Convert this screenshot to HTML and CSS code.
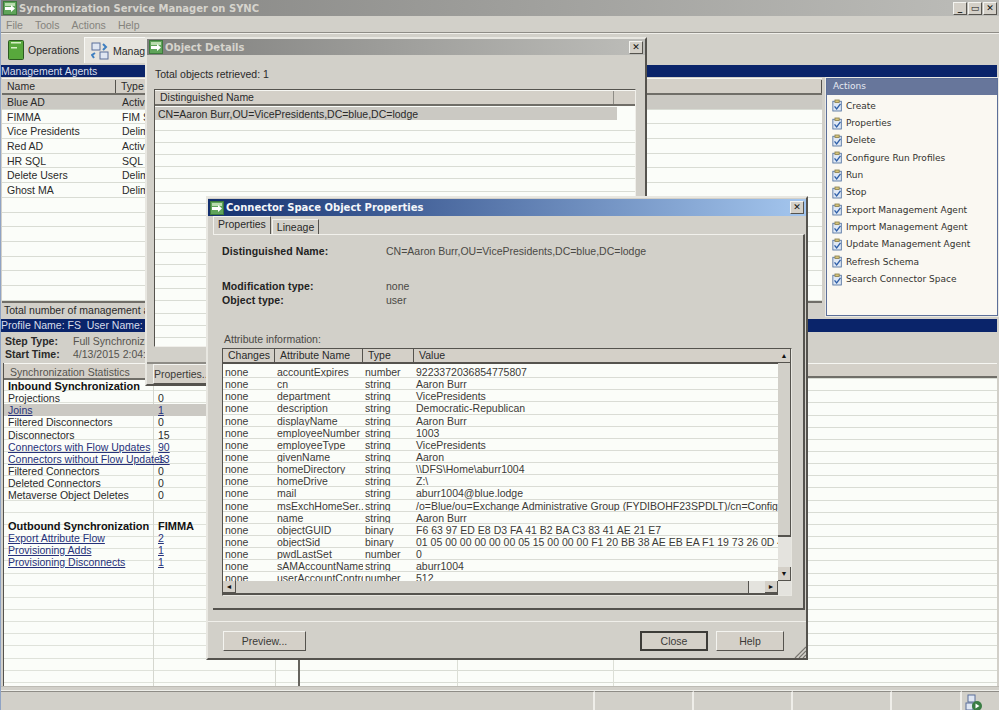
FILE: index.html
```html
<!DOCTYPE html>
<html lang="en">

<head>
    <meta charset="UTF-8">
    <title>Synchronization Service Manager on SYNC</title>
    <link rel="stylesheet" href="styles.css">
</head>

<body>
    <svg class="defs" width="0" height="0">
        <symbol id="app-icon" viewBox="0 0 14 14">
            <rect x="0.5" y="0.5" width="13" height="13" fill="#5fa45a" stroke="#3c7a3c" />
            <rect x="2" y="2" width="10" height="3" fill="#b9dcae" />
            <path d="M2 6h6V4l4 3.5-4 3.5V9H2z" fill="#fff" />
        </symbol>
        <symbol id="task-icon" viewBox="0 0 13 14">
            <rect x="1" y="2" width="10" height="11.5" fill="#dfe8f4" stroke="#4f6f9f" />
            <rect x="3.5" y="0.5" width="5" height="3" fill="#d8c67c" stroke="#8b8050" />
            <path d="M3 8l2.5 3L10 5" fill="none" stroke="#2f5fa8" stroke-width="1.6" />
        </symbol>
    </svg>

    <div class="window">
        <div class="titlebar inactive">
            <svg class="title-icon"><use href="#app-icon" /></svg>
            <span class="title-text">Synchronization Service Manager on SYNC</span>
            <div class="caption-buttons">
                <span class="caption-btn">_</span>
                <span class="caption-btn">&#9645;</span>
                <span class="caption-btn">&#10005;</span>
            </div>
        </div>

        <div class="menubar">
            <span>File</span>
            <span>Tools</span>
            <span>Actions</span>
            <span>Help</span>
        </div>

        <div class="toolbar">
            <div class="tool">
                <svg width="16" height="20" viewBox="0 0 16 20">
                    <rect x="0.5" y="0.5" width="15" height="19" rx="1" fill="#58a83c" stroke="#2c5a20" />
                    <rect x="3" y="2" width="10" height="1.5" fill="#d6efc4" />
                    <rect x="3" y="7" width="6" height="1.5" fill="#d6efc4" />
                </svg>
                <span>Operations</span>
            </div>
            <div class="tool tool-active">
                <svg width="18" height="18" viewBox="0 0 18 18">
                    <rect x="1" y="1" width="8" height="7" fill="#dfe6f2" stroke="#5b6f9a" />
                    <rect x="9" y="10" width="8" height="7" fill="#dfe6f2" stroke="#5b6f9a" />
                    <path d="M12 2l3 3-3 3M3 16l-2-3 3-2" fill="none" stroke="#3f7fc0" stroke-width="2" />
                </svg>
                <span>Management Agents</span>
            </div>
        </div>

        <div class="bluebar">Management Agents</div>

        <section class="upper">
            <div class="agents">
                <div class="list-head agents-head">
                    <span>Name</span>
                    <span>Type</span>
                    <span></span>
                </div>
                <div class="agents-body">
                    <div class="agent selected"><span>Blue AD</span><span>Active Directory</span></div>
                    <div class="agent"><span>FIMMA</span><span>FIM Service</span></div>
                    <div class="agent"><span>Vice Presidents</span><span>Delimited</span></div>
                    <div class="agent"><span>Red AD</span><span>Active Directory</span></div>
                    <div class="agent"><span>HR SQL</span><span>SQL Server</span></div>
                    <div class="agent"><span>Delete Users</span><span>Delimited</span></div>
                    <div class="agent"><span>Ghost MA</span><span>Delimited</span></div>
                </div>
                <div class="agents-total">Total number of management agents: 7</div>
            </div>

            <aside class="actions">
                <div class="actions-head">Actions</div>
                <ul class="actions-list">
                    <li><svg><use href="#task-icon" /></svg>Create</li>
                    <li><svg><use href="#task-icon" /></svg>Properties</li>
                    <li><svg><use href="#task-icon" /></svg>Delete</li>
                    <li><svg><use href="#task-icon" /></svg>Configure Run Profiles</li>
                    <li><svg><use href="#task-icon" /></svg>Run</li>
                    <li><svg><use href="#task-icon" /></svg>Stop</li>
                    <li><svg><use href="#task-icon" /></svg>Export Management Agent</li>
                    <li><svg><use href="#task-icon" /></svg>Import Management Agent</li>
                    <li><svg><use href="#task-icon" /></svg>Update Management Agent</li>
                    <li><svg><use href="#task-icon" /></svg>Refresh Schema</li>
                    <li><svg><use href="#task-icon" /></svg>Search Connector Space</li>
                </ul>
            </aside>
        </section>

        <div class="bluebar bluebar-profile">Profile Name: FS&nbsp; User Name: BLUE\administrator</div>

        <div class="step-info">
            <b>Step Type:</b><span>Full Synchronization</span>
            <b>Start Time:</b><span>4/13/2015 2:04:58 PM</span>
        </div>

        <section class="lower">
            <div class="stats">
                <div class="list-head stats-head">Synchronization Statistics</div>
                <div class="stat stat-title"><span>Inbound Synchronization</span><span></span></div>
                <div class="stat"><span>Projections</span><span>0</span></div>
                <div class="stat selected"><a>Joins</a><a>1</a></div>
                <div class="stat"><span>Filtered Disconnectors</span><span>0</span></div>
                <div class="stat"><span>Disconnectors</span><span>15</span></div>
                <div class="stat"><a>Connectors with Flow Updates</a><a>90</a></div>
                <div class="stat"><a>Connectors without Flow Updates</a><a>13</a></div>
                <div class="stat"><span>Filtered Connectors</span><span>0</span></div>
                <div class="stat"><span>Deleted Connectors</span><span>0</span></div>
                <div class="stat"><span>Metaverse Object Deletes</span><span>0</span></div>
                <div class="stat"></div>
                <div class="stat stat-title"><span>Outbound Synchronization</span><span>FIMMA</span></div>
                <div class="stat"><a>Export Attribute Flow</a><a>2</a></div>
                <div class="stat"><a>Provisioning Adds</a><a>1</a></div>
                <div class="stat"><a>Provisioning Disconnects</a><a>1</a></div>
            </div>
            <div class="connections">
                <div class="list-head connections-head"></div>
            </div>
        </section>

        <div class="statusbar">
            <span class="pane pane-wide"></span>
            <span class="pane"></span>
            <span class="pane"></span>
            <span class="pane"></span>
            <span class="pane pane-short"></span>
            <span class="pane pane-icon">
                <svg width="18" height="18" viewBox="0 0 18 18">
                    <rect x="3" y="1" width="7" height="7" fill="#dfe6f2" stroke="#5b6f9a" />
                    <rect x="1" y="9" width="7" height="7" fill="#dfe6f2" stroke="#5b6f9a" />
                    <circle cx="12" cy="12" r="5" fill="#3a7d44" />
                    <path d="M10.5 9.5l4 2.5-4 2.5z" fill="#fff" />
                </svg>
            </span>
        </div>
    </div>

    <!-- Object Details -->
    <div class="dialog details">
        <div class="titlebar inactive">
            <svg class="title-icon"><use href="#app-icon" /></svg>
            <span class="title-text">Object Details</span>
            <div class="caption-buttons"><span class="caption-btn">&#10005;</span></div>
        </div>
        <p class="details-count">Total objects retrieved: 1</p>
        <div class="details-list">
            <div class="list-head details-head"><span>Distinguished Name</span><span></span></div>
            <div class="details-row selected"><span>CN=Aaron Burr,OU=VicePresidents,DC=blue,DC=lodge</span><span></span></div>
        </div>
        <div class="details-foot"><button class="btn">Properties...</button></div>
    </div>

    <!-- Connector Space Object Properties -->
    <div class="dialog props">
        <div class="titlebar active">
            <svg class="title-icon"><use href="#app-icon" /></svg>
            <span class="title-text">Connector Space Object Properties</span>
            <div class="caption-buttons"><span class="caption-btn">&#10005;</span></div>
        </div>

        <div class="tabs">
            <span class="tab tab-active">Properties</span>
            <span class="tab">Lineage</span>
        </div>

        <div class="tab-panel">
            <div class="field field-dn"><b>Distinguished Name:</b><span>CN=Aaron Burr,OU=VicePresidents,DC=blue,DC=lodge</span></div>
            <div class="field field-mod"><b>Modification type:</b><span>none</span></div>
            <div class="field"><b>Object type:</b><span>user</span></div>
            <div class="attr-label">Attribute information:</div>

            <div class="attr-list">
                <div class="attr-main">
                    <div class="list-head attr-head">
                        <span>Changes</span><span>Attribute Name</span><span>Type</span><span>Value</span>
                    </div>
                    <div class="attr-body">
                        <div class="attr-row"><span>none</span><span>accountExpires</span><span>number</span><span>9223372036854775807</span></div>
                        <div class="attr-row"><span>none</span><span>cn</span><span>string</span><span>Aaron Burr</span></div>
                        <div class="attr-row"><span>none</span><span>department</span><span>string</span><span>VicePresidents</span></div>
                        <div class="attr-row"><span>none</span><span>description</span><span>string</span><span>Democratic-Republican</span></div>
                        <div class="attr-row"><span>none</span><span>displayName</span><span>string</span><span>Aaron Burr</span></div>
                        <div class="attr-row"><span>none</span><span>employeeNumber</span><span>string</span><span>1003</span></div>
                        <div class="attr-row"><span>none</span><span>employeeType</span><span>string</span><span>VicePresidents</span></div>
                        <div class="attr-row"><span>none</span><span>givenName</span><span>string</span><span>Aaron</span></div>
                        <div class="attr-row"><span>none</span><span>homeDirectory</span><span>string</span><span>\\DFS\Home\aburr1004</span></div>
                        <div class="attr-row"><span>none</span><span>homeDrive</span><span>string</span><span>Z:\</span></div>
                        <div class="attr-row"><span>none</span><span>mail</span><span>string</span><span>aburr1004@blue.lodge</span></div>
                        <div class="attr-row"><span>none</span><span>msExchHomeSer...</span><span>string</span><span>/o=Blue/ou=Exchange Administrative Group (FYDIBOHF23SPDLT)/cn=Configuration/cn=Servers</span></div>
                        <div class="attr-row"><span>none</span><span>name</span><span>string</span><span>Aaron Burr</span></div>
                        <div class="attr-row"><span>none</span><span>objectGUID</span><span>binary</span><span>F6 63 97 ED E8 D3 FA 41 B2 BA C3 83 41 AE 21 E7</span></div>
                        <div class="attr-row"><span>none</span><span>objectSid</span><span>binary</span><span>01 05 00 00 00 00 00 05 15 00 00 00 F1 20 BB 38 AE EB EA F1 19 73 26 0D 4C 05 00 00</span></div>
                        <div class="attr-row"><span>none</span><span>pwdLastSet</span><span>number</span><span>0</span></div>
                        <div class="attr-row"><span>none</span><span>sAMAccountName</span><span>string</span><span>aburr1004</span></div>
                        <div class="attr-row"><span>none</span><span>userAccountControl</span><span>number</span><span>512</span></div>
                    </div>
                    <div class="hscroll">
                        <span class="sb-btn">&#9668;</span>
                        <span class="sb-thumb"></span>
                        <span class="sb-track"></span>
                        <span class="sb-btn">&#9658;</span>
                    </div>
                </div>
                <div class="vscroll">
                    <span class="sb-btn">&#9650;</span>
                    <span class="sb-thumb"></span>
                    <span class="sb-track"></span>
                    <span class="sb-btn">&#9660;</span>
                    <span class="sb-corner"></span>
                </div>
            </div>
        </div>

        <div class="props-foot">
            <button class="btn btn-preview">Preview...</button>
            <button class="btn btn-default">Close</button>
            <button class="btn">Help</button>
            <svg class="grip" width="12" height="12" viewBox="0 0 12 12">
                <path d="M1 12L12 1M5 12l7-7M9 12l3-3" stroke="#77756f" stroke-width="1.2" fill="none" />
            </svg>
        </div>
    </div>
</body>

</html>
```

FILE: styles.css
```css
* {
    box-sizing: border-box;
}

body {
    margin: 0;
    width: 999px;
    height: 710px;
    overflow: hidden;
    position: relative;
    background-color: #d2d0c9;
    color: #2a2a2a;
    font-family: "Liberation Sans", Arial, sans-serif;
    font-size: 10.5px;
}

.defs {
    position: absolute;
}

.window {
    height: 710px;
    display: flex;
    flex-direction: column;
    border-left: 1px solid #8fa3c4;
}

/* Title bars */
.titlebar {
    display: flex;
    align-items: center;
    height: 16px;
    padding-left: 2px;
    font-family: "DejaVu Sans", Verdana, sans-serif;
    font-size: 10px;
    font-weight: bold;
}

.titlebar.inactive {
    background: linear-gradient(to right, #7f7f7d, #bdbdb9);
    color: #d6d4cd;
}

.titlebar.active {
    background: linear-gradient(to right, #14306f, #a4c6ee);
    color: #f4f6fa;
}

.title-icon {
    width: 14px;
    height: 14px;
    margin-right: 2px;
    flex: none;
}

.caption-buttons {
    margin-left: auto;
    margin-right: 2px;
    display: flex;
    gap: 1px;
}

.caption-btn {
    width: 14px;
    height: 13px;
    display: flex;
    align-items: center;
    justify-content: center;
    background-color: #d4d0c8;
    color: #111;
    font-size: 9px;
    line-height: 1;
    border: 1px solid;
    border-color: #f4f4f0 #55534e #55534e #f4f4f0;
}

/* Menu and toolbar */
.menubar {
    display: flex;
    gap: 12px;
    height: 17px;
    padding-left: 5px;
    align-items: center;
    color: #85837d;
}

.toolbar {
    height: 32px;
    display: flex;
    align-items: flex-end;
    gap: 4px;
    padding: 0 0 2px 7px;
    border-top: 1px solid #f0efea;
    box-shadow: 0 -1px 0 #8e8c86;
}

.tool {
    display: flex;
    align-items: center;
    gap: 4px;
    height: 26px;
    width: 72px;
}

.tool-active {
    width: 200px;
    padding-left: 6px;
    background-color: #e6e4de;
    border-top: 1px solid #f8f8f5;
    border-left: 1px solid #f8f8f5;
}

.bluebar {
    height: 12px;
    line-height: 12px;
    margin-right: 2px;
    background-color: #0a246a;
    color: #d8deec;
    white-space: nowrap;
    flex: none;
}

/* Upper part: management agents and actions */
.upper {
    height: 240px;
    display: flex;
    gap: 4px;
    padding-top: 1px;
    margin-right: 1px;
    flex: none;
}

.agents {
    flex: 1;
    display: flex;
    flex-direction: column;
    padding-left: 1px;
}

.list-head {
    background-color: #d4d0c8;
    border-top: 1px solid #f6f6f2;
    border-bottom: 2px solid #706e68;
    line-height: 13px;
}

.agents-head {
    display: grid;
    grid-template-columns: 114px 1fr;
    height: 17px;
    padding-top: 1px;
}

.agents-head span {
    padding-left: 5px;
    border-right: 1px solid #55534e;
}

.agents-body {
    flex: 1;
    background-color: #fbfdf9;
    background-image: repeating-linear-gradient(to bottom, transparent 0, transparent 13.7px, #d9dcd4 13.7px, #d9dcd4 14.7px);
}

.agent {
    display: grid;
    grid-template-columns: 114px 1fr;
    height: 14.7px;
    line-height: 14.7px;
    padding-left: 5px;
    border-bottom: 1px solid #d9dcd4;
}

.agent span:last-child {
    padding-left: 1px;
}

.selected {
    background-color: #cbc9c3;
}

.agents-total {
    height: 16px;
    line-height: 15px;
    padding-left: 2px;
    border-top: 2px solid #706e68;
}

.actions {
    width: 172px;
    flex: none;
    margin-bottom: 1px;
    display: flex;
    flex-direction: column;
    background-color: #faf8f2;
    border: 1px solid #5c6f99;
    box-shadow: 0 0 0 1px #ebeae4;
    font-family: "DejaVu Sans", Verdana, sans-serif;
    font-size: 9px;
}

.actions-head {
    height: 16px;
    line-height: 15px;
    padding-left: 6px;
    background-color: #67769b;
    color: #e6e9f2;
}

.actions-list {
    list-style-type: none;
    margin: 0;
    padding: 2px 0 0 5px;
}

.actions-list li {
    height: 17.35px;
    display: flex;
    align-items: center;
    gap: 3px;
    color: #33322f;
}

.actions-list svg {
    width: 11px;
    height: 13px;
    flex: none;
}

.bluebar-profile {
    margin-top: 2px;
    height: 13px;
    line-height: 13px;
}

.step-info {
    height: 31px;
    display: grid;
    grid-template-columns: 68px 1fr;
    align-content: center;
    padding-left: 4px;
    line-height: 13px;
    flex: none;
}

.step-info span {
    color: #55534e;
}

/* Lower part: statistics */
.lower {
    flex: 1;
    display: flex;
    margin-right: 2px;
    min-height: 0;
}

.stats {
    width: 297px;
    flex: none;
    margin-left: 2px;
    background-color: #fbfdf9;
    background-image:
        linear-gradient(#d5d7cf, #d5d7cf),
        linear-gradient(#d5d7cf, #d5d7cf),
        repeating-linear-gradient(to bottom, transparent 0, transparent 11.15px, #dfe2da 11.15px, #dfe2da 12.15px);
    background-size: 1px 100%, 1px 100%, 100% 100%;
    background-position: 149px 0, 271px 0, 0 4px;
    background-repeat: no-repeat;
    border-left: 1px solid #55534e;
    border-right: 2px solid #66645e;
    overflow: hidden;
}

.stats-head {
    height: 17px;
    padding: 2px 0 0 6px;
    line-height: 13px;
    color: #55534e;
}

.stat {
    display: grid;
    grid-template-columns: 149px 1fr;
    height: 12.15px;
    line-height: 12.15px;
    padding-left: 4px;
    white-space: nowrap;
}

.stat a {
    color: #26317a;
    text-decoration: underline;
}

.stat > :last-child {
    padding-left: 1px;
}

.stat-title {
    font-weight: bold;
    font-size: 11px;
    color: #111;
}

.stat-title + .stat {
    margin-top: 0;
}

.stat:nth-child(12) {
    margin-top: 6px;
}

.connections {
    flex: 1;
    background-color: #fbfdf9;
    background-image:
        linear-gradient(#dcdfd6, #dcdfd6),
        linear-gradient(#dcdfd6, #dcdfd6),
        repeating-linear-gradient(to bottom, transparent 0, transparent 11.15px, #d9dcd4 11.15px, #d9dcd4 12.15px);
    background-size: 1px 100%, 1px 100%, 100% 100%;
    background-position: 157px 0, 313px 0, 0 4px;
    background-repeat: no-repeat;
}

.connections-head {
    height: 15px;
}

.statusbar {
    height: 24px;
    flex: none;
    display: flex;
    padding-top: 4px;
    box-shadow: inset 0 3px 0 #d2d0c9, inset 0 4px 0 #eeeee9;
    border-top: 1px solid #bdbbb4;
}

.pane {
    width: 99px;
    border-top: 1px solid #8e8c86;
    border-right: 2px solid #efeee9;
}

.pane-wide {
    width: 594px;
}

.pane-short {
    width: 70px;
}

.pane-icon {
    flex: 1;
    border-right: 0;
    padding: 2px 0 0 3px;
}

/* Dialogs sit over the main window */
.dialog {
    position: absolute;
    display: flex;
    flex-direction: column;
    background-color: #d2d0c9;
    border: 2px solid;
    border-color: #e8e7e1 #55534e #55534e #e8e7e1;
}

.details {
    left: 145px;
    top: 37px;
    width: 502px;
    height: 349px;
}

.details-count {
    margin: 13px 0 0 8px;
    height: 13px;
    line-height: 13px;
}

.details-list {
    margin: 8px 9px 0 7px;
    height: 258px;
    background-color: #fbfdf9;
    background-image: repeating-linear-gradient(to bottom, transparent 0, transparent 11.2px, #d9dcd4 11.2px, #d9dcd4 12.2px);
    background-position: 0 4px;
    border: 1px solid #55534e;
    border-right-color: #f0efea;
    border-bottom-color: #f0efea;
}

.details-head {
    display: grid;
    grid-template-columns: 459px 1fr;
    height: 16px;
}

.details-head span:first-child {
    padding-left: 5px;
    border-right: 1px solid #8e8c86;
}

.details-row {
    display: grid;
    grid-template-columns: 459px 1fr;
    height: 13px;
    line-height: 14px;
    padding-left: 3px;
    margin-top: 1px;
}

.details-row span:last-child {
    background-color: #fbfdf9;
}

.details-foot {
    flex: 1;
    border-top: 2px solid #8e8c86;
    margin-top: 15px;
    padding: 0 0 0 6px;
}

.details-foot .btn {
    width: 90px;
    margin-top: 0;
    text-align: left;
}

.props {
    left: 206px;
    top: 196px;
    width: 602px;
    height: 464px;
}

.props > .titlebar {
    margin-top: 1px;
    height: 17px;
}

.tabs {
    height: 18px;
    display: flex;
    align-items: flex-end;
    padding-left: 5px;
    margin-top: 0;
}

.tab {
    height: 15px;
    line-height: 14px;
    padding: 0 4px;
    border-top: 1px solid #f2f1ec;
    border-left: 1px solid #f2f1ec;
    border-right: 1px solid #55534e;
    margin-left: 1px;
}

.tab-active {
    height: 18px;
    line-height: 15px;
    margin-left: 0;
}

.tab-panel {
    height: 376px;
    margin: 0 1px 0 5px;
    padding: 9px 0 0 9px;
    border-top: 1px solid #f2f1ec;
    border-right: 2px solid #55534e;
    border-bottom: 2px solid #55534e;
}

.field {
    display: grid;
    grid-template-columns: 164px 1fr;
    height: 14px;
    line-height: 14px;
}

.field b {
    letter-spacing: 0.1px;
    color: #222;
}

.field span {
    color: #4a4945;
}

.field-dn {
    margin-bottom: 21px;
}

.field-mod {
    margin-bottom: 0;
}

.attr-label {
    height: 13px;
    line-height: 13px;
    margin: 26px 0 0 2px;
    color: #4a4945;
}

.attr-list {
    width: 570px;
    height: 248px;
    margin-top: 2px;
    display: flex;
    border: 1px solid #55534e;
    border-right-color: #e8e7e1;
    border-bottom-color: #e8e7e1;
}

.attr-main {
    flex: 1;
    min-width: 0;
    display: flex;
    flex-direction: column;
}

.attr-head {
    display: grid;
    grid-template-columns: 52px 88px 51px 1fr;
    height: 15px;
    border-top: 0;
    border-bottom: 2px solid #55534e;
}

.attr-head span {
    padding-left: 5px;
    border-right: 1px solid #55534e;
}

.attr-head span:last-child {
    border-right: 0;
}

.attr-body {
    height: 217px;
    background-color: #fbfdf9;
    padding-top: 2px;
    overflow: hidden;
}

.attr-row {
    display: grid;
    grid-template-columns: 52px 88px 51px 1fr;
    height: 12.15px;
    line-height: 12.15px;
    border-bottom: 1px solid #dadcd5;
    color: #3b3a37;
    white-space: nowrap;
    overflow: hidden;
}

.attr-row span {
    padding-left: 2px;
    overflow: hidden;
}

.hscroll {
    flex: 1;
    display: flex;
    background-color: #d2d0c9;
    border-bottom: 2px solid #55534e;
}

.hscroll .sb-btn {
    width: 13px;
}

.hscroll .sb-thumb {
    width: 513px;
    border-right: 1px solid #55534e;
}

.hscroll .sb-track {
    flex: 1;
    background-color: #e4e3de;
}

.vscroll {
    width: 13px;
    flex: none;
    display: flex;
    flex-direction: column;
    background-color: #d2d0c9;
}

.vscroll .sb-btn {
    height: 14px;
}

.vscroll .sb-thumb {
    height: 174px;
    border-right: 1px solid #55534e;
    border-bottom: 2px solid #55534e;
}

.vscroll .sb-track {
    height: 30px;
    background-color: #e4e3de;
}

.vscroll .sb-corner {
    flex: 1;
    background-color: #e4e3de;
}

.sb-btn {
    display: flex;
    align-items: center;
    justify-content: center;
    background-color: #d4d0c8;
    color: #111;
    font-size: 7px;
    line-height: 1;
    border-right: 1px solid #55534e;
    border-bottom: 1px solid #55534e;
    flex: none;
}

.props-foot {
    flex: 1;
    position: relative;
    display: flex;
    gap: 8px;
    padding: 21px 0 0 15px;
    border-top: 0;
    box-shadow: inset 0 11px 0 #d2d0c9, inset 0 12px 0 #f0efea;
}

.btn {
    width: 68px;
    height: 20px;
    padding: 0;
    font-family: inherit;
    font-size: 10.5px;
    color: #3b3a37;
    background-color: #d4d0c8;
    border: 1px solid;
    border-color: #f4f4f0 #55534e #55534e #f4f4f0;
}

.btn-preview {
    width: 83px;
    margin-right: 326px;
}

.btn-default {
    border: 2px solid #55534e;
    border-color: #3d3c38;
}

.grip {
    position: absolute;
    right: 0;
    bottom: 0;
}
```
